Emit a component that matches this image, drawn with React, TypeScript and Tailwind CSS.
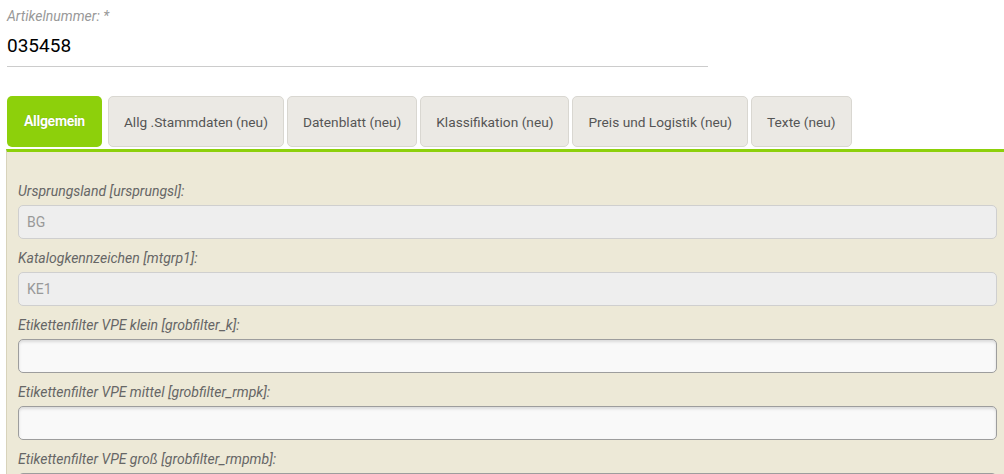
import {ReactNode} from "react";

interface IField {
    label: string,
    value?: string,
    disabled?: boolean
}

const fields: IField[] = [
    {label: 'Ursprungsland [ursprungsl]:', value: 'BG', disabled: true},
    {label: 'Katalogkennzeichen [mtgrp1]:', value: 'KE1', disabled: true},
    {label: 'Etikettenfilter VPE klein [grobfilter_k]:', value: ''},
    {label: 'Etikettenfilter VPE mittel [grobfilter_rmpk]:', value: ''},
    {label: 'Etikettenfilter VPE groß [grobfilter_rmpmb]:', value: ''},
]

const tabs = [
    'Allg .Stammdaten (neu)',
    'Datenblatt (neu)',
    'Klassifikation (neu)',
    'Preis und Logistik (neu)',
    'Texte (neu)',
]

function Tab({children, active}: {children: ReactNode, active?: boolean}) {
    if (active) {
        return (
            <div className="h-[51px] px-[17px] mr-[6px] flex items-center rounded-[5px] bg-[#8dd00b] text-white font-bold text-[14px] tracking-[-0.3px] [text-shadow:0_0_1px_rgba(0,0,0,0.25)]">
                {children}
            </div>
        )
    }
    return (
        <div className="h-[51px] px-[15px] mr-[3px] flex items-center rounded-[5px] border border-[#d9d7d1] bg-[#ebe9e4] text-[#555] text-[13.7px] pt-[1px]">
            {children}
        </div>
    )
}

function Field({label, value, disabled}: IField) {
    return (
        <div className="mb-[10px]">
            <div className="h-[18px] leading-[18px] mb-[5px] text-[14px] italic text-[#666]">{label}</div>
            {disabled ? (
                <div className="h-[34px] flex items-center px-[8px] rounded-[5px] border border-[#cfcfcf] bg-[#eeeeee] text-[14px] text-[#999]">
                    {value}
                </div>
            ) : (
                <input
                    className="block w-full h-[34px] px-[8px] rounded-[5px] border border-[#9d9d9d] bg-[#f9f9f9] text-[14px] shadow-[inset_0_2px_3px_rgba(0,0,0,0.12)] outline-none"
                    defaultValue={value}
                />
            )}
        </div>
    )
}

export default function App() {
    return (
        <div className="w-[1004px] h-[474px] overflow-hidden bg-white font-['Roboto',sans-serif]">
            <div className="pl-[7px] pt-[7px] w-[708px]">
                <div className="h-[18px] leading-[18px] text-[14px] italic text-[#999]">Artikelnummer: *</div>
                <div className="h-[42px] leading-[42px] text-[19px] text-black border-b border-[#cccccc]">035458</div>
            </div>
            <div className="flex pl-[7px] mt-[29px]">
                <Tab active>Allgemein</Tab>
                {tabs.map(t => <Tab key={t}>{t}</Tab>)}
            </div>
            <div className="ml-[6px] mt-[2px] border-t-[3px] border-[#8dd00b] border-l border-l-[#d8d3bb] bg-[#ede9d7] pt-[30px] pl-[11px] pr-[7px] pb-[20px]">
                {fields.map(f => <Field key={f.label} {...f}/>)}
            </div>
        </div>
    );
}
